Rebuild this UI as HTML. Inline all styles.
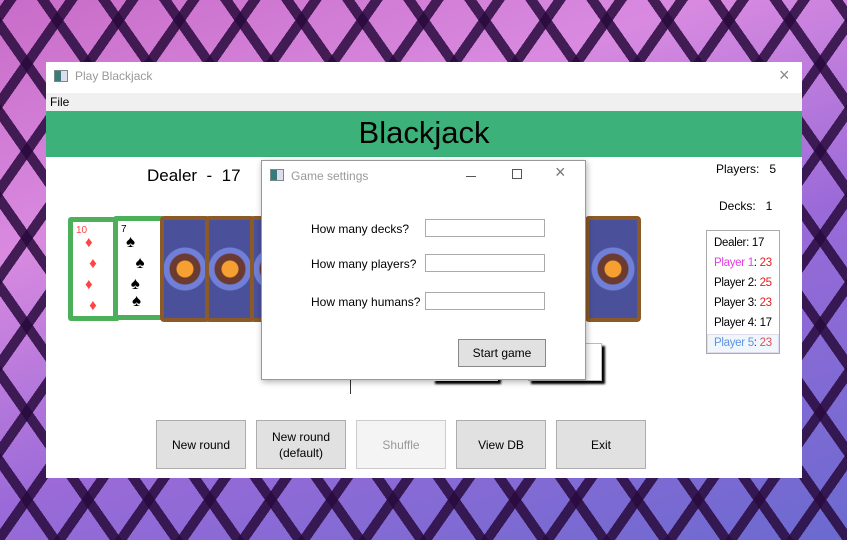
<!DOCTYPE html>
<html><head><style>
*{margin:0;padding:0;box-sizing:border-box}
body{width:847px;height:540px;overflow:hidden;position:relative;font-family:"Segoe UI","Liberation Sans",sans-serif;
background:
repeating-linear-gradient(55deg,transparent 0 40px,rgba(40,10,60,.85) 40px 50px),
repeating-linear-gradient(-55deg,transparent 0 40px,rgba(40,10,60,.85) 40px 50px),
linear-gradient(160deg,#c86cc8 0%,#d98ae0 30%,#9a6ad8 60%,#6a6ad0 100%);}
.abs{position:absolute}
.win{left:46px;top:62px;width:756px;height:416px;background:#fff}
.t{font-size:12px;color:#999}
.btn{position:absolute;background:#e1e1e1;border:1px solid #adadad;font-size:12px;color:#000;display:flex;align-items:center;justify-content:center;text-align:center;line-height:16px}
.card{position:absolute;width:52px;height:104px;border-radius:3px}
.front{background:#fff;border:5px solid #4caf5a}
.back{background:radial-gradient(circle at 50% 50%,#f5a030 0 8px,#6b3a30 9px 15px,#7080d8 16px 21px,#4a509a 22px),#4a509a;border:4px solid #8a5a28;border-radius:4px}
.inp{position:absolute;width:120px;height:18px;border:1px solid #aaa;background:#fff}
.lb{position:absolute;font-size:12px;color:#000}
</style></head><body>
<div class="abs win">
  <div class="abs" style="left:8px;top:8px;width:14px;height:12px;border:1px solid #7a8a8a;background:linear-gradient(90deg,#3a7a7a 50%,#dde 50%)"></div>
  <div class="abs t" style="left:29px;top:7px">Play Blackjack</div>
  <div class="abs" style="left:733px;top:3px;font-size:18px;font-weight:300;color:#888">×</div>
  <div class="abs" style="left:0;top:31px;width:756px;height:18px;background:#f0f0f0;font-size:12px;padding:2px 4px">File</div>
  <div class="abs" style="left:0;top:49px;width:756px;height:46px;background:#3cb179;text-align:center;font-size:31px;line-height:44px;color:#000">Blackjack</div>
  <div class="abs" style="left:101px;top:104px;font-size:17px">Dealer&nbsp; - &nbsp;17</div>
  <div class="abs" style="left:670px;top:100px;font-size:12px">Players:&nbsp;&nbsp; 5</div>
  <div class="abs" style="left:673px;top:137px;font-size:12px">Decks:&nbsp;&nbsp; 1</div>
  <div class="abs" style="left:660px;top:168px;width:74px;height:124px;border:1px solid #aaa;font-size:11.5px;line-height:20px;padding:2px 0 0 7px;letter-spacing:-0.3px;white-space:nowrap">
    Dealer: 17<br><span style="color:#e040e0">Player 1</span>: <span style="color:#e02020">23</span><br>Player 2: <span style="color:#e02020">25</span><br>Player 3: <span style="color:#e02020">23</span><br>Player 4: 17<br><span style="color:#3a7ad8">Player 5</span>: <span style="color:#e02020">23</span>
  </div>
  <div class="abs" style="left:661px;top:272px;width:72px;height:19px;background:rgba(200,220,245,.25);border:1px solid #dde"></div>
</div>
<div class="card front" style="left:68px;top:217px;"><div class="abs" style="left:3px;top:3px;color:#f44;font-size:10px">10</div><div class="abs" style="left:12px;top:10px;color:#f44;font-size:15px;line-height:21px">♦<br>&nbsp;♦<br>♦<br>&nbsp;♦</div></div>
<div class="card front" style="left:113px;top:216px;"><div class="abs" style="left:3px;top:3px;font-size:10px">7</div><div class="abs" style="left:8px;top:10px;font-size:17px;line-height:21px">♠<br>&nbsp;&nbsp;♠<br>&nbsp;♠<br><br></div><div class="abs" style="left:14px;top:70px;font-size:17px">♠</div></div>
<div class="card back" style="left:160px;top:216px;width:50px;height:106px"></div>
<div class="card back" style="left:205px;top:216px;width:50px;height:106px"></div>
<div class="card back" style="left:250px;top:216px;width:50px;height:106px"></div>
<div class="card back" style="left:585px;top:216px;width:56px;height:106px"></div>
<div class="abs" style="left:432px;top:343px;width:66px;height:38px;background:#fff;box-shadow:3px 3px 2px #000"></div>
<div class="abs" style="left:528px;top:343px;width:74px;height:38px;background:#fff;border:1px solid #bbb;box-shadow:3px 3px 2px #000"></div>
<div class="abs" style="left:350px;top:370px;width:1px;height:24px;background:#333"></div>
<div class="abs" style="left:261px;top:160px;width:325px;height:220px;background:#fff;border:1px solid #999;box-shadow:1px 2px 6px rgba(0,0,0,.3)">
  <div class="abs" style="left:8px;top:8px;width:14px;height:12px;border:1px solid #7a8a8a;background:linear-gradient(90deg,#3a7a7a 50%,#dde 50%)"></div>
  <div class="abs t" style="left:29px;top:8px">Game settings</div>
  <div class="abs" style="left:204px;top:15px;width:10px;height:1px;background:#555"></div>
  <div class="abs" style="left:250px;top:8px;width:10px;height:10px;border:1px solid #555"></div>
  <div class="abs" style="left:293px;top:1px;font-size:18px;font-weight:300;color:#777">×</div>
  <div class="lb" style="left:49px;top:61px">How many decks?</div>
  <div class="lb" style="left:49px;top:96px">How many players?</div>
  <div class="lb" style="left:49px;top:134px">How many humans?</div>
  <div class="inp" style="left:163px;top:58px"></div>
  <div class="inp" style="left:163px;top:93px"></div>
  <div class="inp" style="left:163px;top:131px"></div>
  <div class="btn" style="left:196px;top:178px;width:88px;height:28px;border-color:#888">Start game</div>
</div>
<div class="btn" style="left:156px;top:420px;width:90px;height:49px">New round</div>
<div class="btn" style="left:256px;top:420px;width:90px;height:49px">New round<br>(default)</div>
<div class="btn" style="left:356px;top:420px;width:90px;height:49px;background:#f4f4f4;border-color:#ccc;color:#999">Shuffle</div>
<div class="btn" style="left:456px;top:420px;width:90px;height:49px">View DB</div>
<div class="btn" style="left:556px;top:420px;width:90px;height:49px">Exit</div>
</body></html>
